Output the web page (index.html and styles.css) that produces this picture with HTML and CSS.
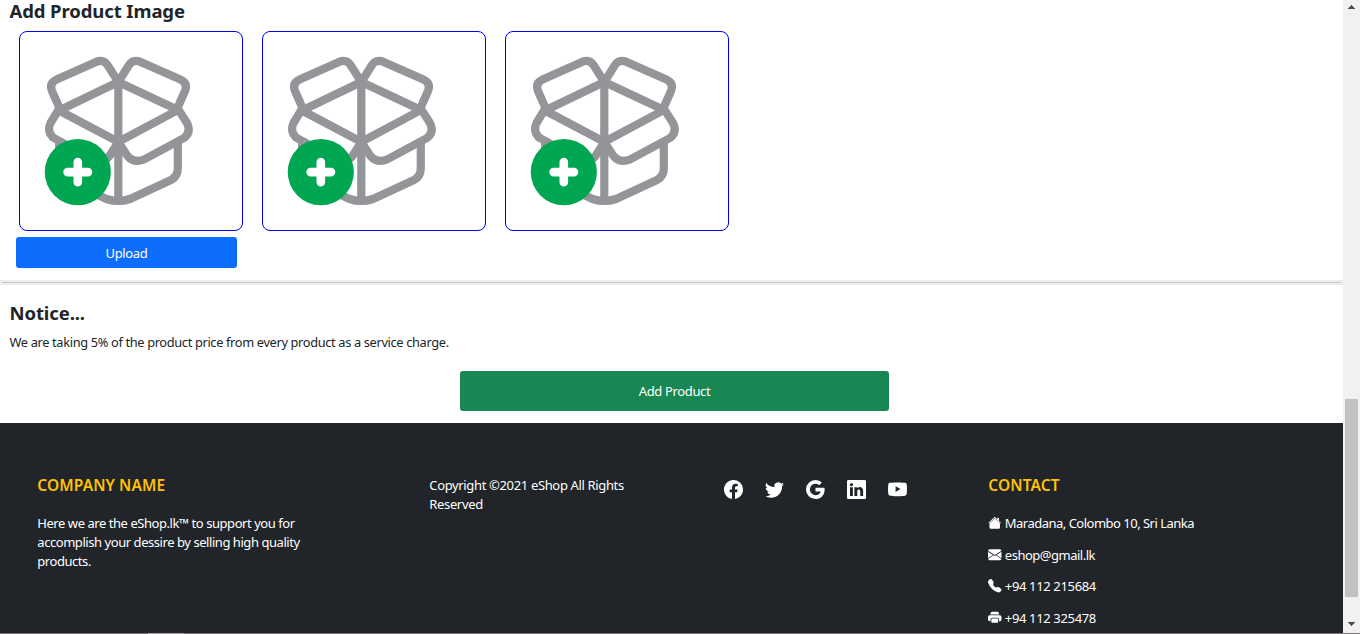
FILE: index.html
```html
<!DOCTYPE html>
<html lang="en">
<head>
<meta charset="utf-8">
<title>eShop | Add Product</title>
<link rel="stylesheet" href="styles.css">
</head>
<body>
<svg class="defs" width="0" height="0">
  <symbol id="box" viewBox="20 32 222 198">
    <g fill="none" stroke="#939598" stroke-width="8.2" stroke-linejoin="round">
      <path d="M118.3 80V201"/>
      <path d="M59 110.5L118.3 141.8L178 110L118.3 82Z"/>
      <path d="M118.3 82L107.500 65Q103.5 58.800 96 61.900L56 79.800Q49 83.500 52 91L59.500 108"/>
      <path d="M118.300 82L129 65Q133 58.800 140.600 61.900L181 79.800Q188 83.500 185 91L177.500 108"/>
      <path d="M59 109L50.500 123Q46.500 131 53 137.500L94 160Q103.500 163 109.500 156L118.300 142"/>
      <path d="M178 109L187 123Q191.500 132 184 138L144 159.500Q134 163.500 127.500 156L118.300 142"/>
      <path d="M177.800 140V168Q178 176 171 180L130 199Q118.300 203 106.500 199L66 180Q59 176 59.200 168V138"/>
    </g>
    <circle cx="77.800" cy="172.100" r="33.100" fill="#00a651"/>
    <path d="M77.800 162V182.300M67.600 172.100H88" stroke="#fff" stroke-width="8.600" stroke-linecap="round"/>
  </symbol>
</svg>
<div class="window">
  <main class="page">
    <section class="images">
      <h2 class="heading">Add Product Image</h2>
      <div class="cards">
        <div class="card"><svg><use href="#box"/></svg></div>
        <div class="card"><svg><use href="#box"/></svg></div>
        <div class="card"><svg><use href="#box"/></svg></div>
      </div>
      <button class="btn upload">Upload</button>
    </section>
    <div class="rule"></div>
    <section class="notice">
      <h2 class="heading">Notice...</h2>
      <p class="notice-text">We are taking 5% of the product price from every product as a service charge.</p>
      <button class="btn add">Add Product</button>
    </section>
    <footer class="footer">
      <div class="company">
        <h6 class="title">COMPANY NAME</h6>
        <p class="about">Here we are the eShop.lk™ to support you for<br>accomplish your dessire by selling high quality<br>products.</p>
      </div>
      <p class="copyright">Copyright ©2021 eShop All Rights<br>Reserved</p>
      <div class="social">
        <svg viewBox="0 0 16 16"><path d="M16 8.049c0-4.446-3.582-8.050-8-8.050C3.580 0-.002 3.603-.002 8.050c0 4.017 2.926 7.347 6.750 7.951v-5.625h-2.030V8.050H6.750V6.275c0-2.017 1.195-3.131 3.022-3.131.876 0 1.791.157 1.791.157v1.980h-1.009c-.993 0-1.303.621-1.303 1.258v1.510h2.218l-.354 2.326H9.250V16c3.824-.604 6.750-3.934 6.750-7.951z"/></svg>
        <svg viewBox="0 0 16 16"><path d="M5.026 15c6.038 0 9.341-5.003 9.341-9.334 0-.140 0-.282-.006-.422A6.685 6.685 0 0 0 16 3.542a6.658 6.658 0 0 1-1.889.518 3.301 3.301 0 0 0 1.447-1.817 6.533 6.533 0 0 1-2.087.793A3.286 3.286 0 0 0 7.875 6.030a9.325 9.325 0 0 1-6.767-3.429 3.289 3.289 0 0 0 1.018 4.382A3.323 3.323 0 0 1 .640 6.575v.045a3.288 3.288 0 0 0 2.632 3.218 3.203 3.203 0 0 1-.865.115 3.230 3.230 0 0 1-.614-.057 3.283 3.283 0 0 0 3.067 2.277A6.588 6.588 0 0 1 .780 13.580a6.320 6.320 0 0 1-.780-.045A9.344 9.344 0 0 0 5.026 15z"/></svg>
        <svg viewBox="0 0 16 16"><path d="M15.545 6.558a9.420 9.420 0 0 1 .139 1.626c0 2.434-.870 4.492-2.384 5.885h.002C11.978 15.292 10.158 16 8 16A8 8 0 1 1 8 0a7.689 7.689 0 0 1 5.352 2.082l-2.284 2.284A4.347 4.347 0 0 0 8 3.166c-2.087 0-3.860 1.408-4.492 3.304a4.792 4.792 0 0 0 0 3.063h.003c.635 1.893 2.405 3.301 4.492 3.301 1.078 0 2.004-.276 2.722-.764h-.003a3.702 3.702 0 0 0 1.599-2.431H8v-3.080h7.545z"/></svg>
        <svg viewBox="0 0 16 16"><path d="M0 1.146C0 .513.526 0 1.175 0h13.650C15.474 0 16 .513 16 1.146v13.708c0 .633-.526 1.146-1.175 1.146H1.175C.526 16 0 15.487 0 14.854V1.146zm4.943 12.248V6.169H2.542v7.225h2.401zm-1.200-8.212c.837 0 1.358-.554 1.358-1.248-.015-.709-.520-1.248-1.342-1.248-.822 0-1.359.540-1.359 1.248 0 .694.521 1.248 1.327 1.248h.016zm4.908 8.212V9.359c0-.216.016-.432.080-.586.173-.431.568-.878 1.232-.878.869 0 1.216.662 1.216 1.634v3.865h2.401V9.250c0-2.220-1.184-3.252-2.764-3.252-1.274 0-1.845.700-2.165 1.193v.025h-.016l.016-.025V6.169h-2.400c.030.678 0 7.225 0 7.225h2.400z"/></svg>
        <svg viewBox="0 0 16 16"><path fill-rule="evenodd" d="M8 2C12 2 14 2.200 14.500 2.400C15.300 2.700 15.700 3.300 15.800 4.100C16.060 6.700 16.060 9.300 15.800 11.400C15.600 12.500 15.200 12.900 14.400 13.200C13.500 13.500 11 13.600 8 13.600S2.500 13.500 1.600 13.200C.8 12.900.4 12.500.2 11.400C-.06 9.300-.06 6.700.2 4.100C.3 3.300.7 2.700 1.500 2.400C2 2.200 4 2 8 2zM6.400 5.209v4.818l4.157-2.408z"/></svg>
      </div>
      <div class="contact">
        <h6 class="title contact-title">CONTACT</h6>
        <p class="line address"><svg viewBox="0 0 16 16"><path d="M8 2.800l6.200 6.200V13.500A1.500 1.500 0 0 1 12.700 15h-9.400A1.500 1.500 0 0 1 1.800 13.500V9z"/><path d="M7.293 1.500a1 1 0 0 1 1.414 0L11 3.793V2.500a.5.5 0 0 1 .5-.5h1a.5.5 0 0 1 .5.500v3.293l2.354 2.353-.708.708L8 2.207 1.354 8.854l-.708-.708z"/></svg><span>Maradana, Colombo 10, Sri Lanka</span></p>
        <p class="line email"><svg viewBox="0 0 16 16"><path d="M.05 3.355A2 2 0 0 1 2 1.500h12a2 2 0 0 1 1.950 1.855L8 8.414zM0 4.297v7.804l5.953-3.858zM6.661 8.700l-6.470 4.257A2 2 0 0 0 2 14.500h12a2 2 0 0 0 1.808-1.544l-6.470-4.257L8 9.486zm3.386-.456L16 12.101V4.297z"/></svg><span>eshop@gmail.lk</span></p>
        <p class="line phone"><svg viewBox="0 0 16 16"><path d="M1.885.511a1.745 1.745 0 0 1 2.610.163L6.290 2.980c.329.423.445.974.315 1.494l-.547 2.190a.678.678 0 0 0 .178.643l2.457 2.457a.678.678 0 0 0 .644.178l2.189-.547a1.745 1.745 0 0 1 1.494.315l2.306 1.794c.829.645.905 1.870.163 2.611l-1.034 1.034c-.740.740-1.846 1.065-2.877.702a18.634 18.634 0 0 1-7.010-4.420 18.634 18.634 0 0 1-4.420-7.009c-.362-1.030-.037-2.137.703-2.877z"/></svg><span>+94 112 215684</span></p>
        <p class="line phone"><svg viewBox="0 0 16 16"><path d="M5 1a2 2 0 0 0-2 2v1h10V3a2 2 0 0 0-2-2zM11 9H5a1 1 0 0 0-1 1v3a1 1 0 0 0 1 1h6a1 1 0 0 0 1-1v-3a1 1 0 0 0-1-1z"/><path d="M0 7a2 2 0 0 1 2-2h12a2 2 0 0 1 2 2v3a2 2 0 0 1-2 2h-1v-2a2 2 0 0 0-2-2H5a2 2 0 0 0-2 2v2H2a2 2 0 0 1-2-2z"/></svg><span>+94 112 325478</span></p>
      </div>
    </footer>
  </main>
  <div class="scrollbar">
    <svg class="arrow" viewBox="0 0 7 4"><path d="M3 0h1v1h1v1h1v1h1v1H0V3h1V2h1V1h1z"/></svg>
    <div class="thumb"></div>
    <svg class="arrow" viewBox="0 0 7 4"><path d="M0 0h7v1H6v1H5v1H4v1H3V3H2V2H1V1H0z"/></svg>
  </div>
</div>
<div class="edge"><div class="edge-light"></div></div>
</body>
</html>
```
FILE: styles.css
```css
* { box-sizing: border-box; margin: 0; padding: 0; }
body { width: 1360px; height: 634px; overflow: hidden; background: #fff; color: #212529; font: 13px/19px "Noto Sans", sans-serif; display: flex; flex-direction: column; }
.defs { position: absolute; }
.window { display: flex; height: 633px; }
.page { width: 1343px; display: flex; flex-direction: column; }
.images { height: 280px; flex: none; }
.heading { font-size: 18.500px; line-height: 22px; height: 24px; font-weight: 700; letter-spacing: -0.100px; padding-left: 9.500px; white-space: nowrap; }
.cards { display: flex; gap: 19px; padding: 7px 0 0 19px; }
.card { width: 224px; height: 200px; border: 1px solid #0000f0; border-radius: 8px; }
.card svg { display: block; width: 222px; height: 198px; }
.btn { display: block; border: 0; border-radius: 3px; color: #fff; font: inherit; letter-spacing: -0.350px; }
.upload { width: 221px; height: 31px; margin: 6px 0 0 16px; padding-top: 2px; background: #0d6efd; }
.rule { flex: none; height: 5px; background: #eee; padding: 2px 2px 2px 2px; }
.rule::before { content: ""; display: block; height: 1px; background: #c8c8c8; }
.notice { flex: none; height: 138px; padding-top: 17px; }
.notice-text { padding: 7px 0 0 9.500px; font-size: 12.800px; letter-spacing: -0.340px; white-space: nowrap; }
.add { width: 429px; height: 40px; margin: 19px 0 0 460px; padding-top: 1px; background: #198754; }
.footer { flex: 1; min-height: 0; background: #212529; color: #fff; display: grid; grid-template-columns: 392px 294.500px 264.500px 1fr; padding: 52px 0 0 37.300px; white-space: nowrap; }
.title { font-size: 15.500px; line-height: 20px; font-weight: 600; letter-spacing: 0.100px; color: #ffc107; }
.about { padding-top: 19px; letter-spacing: -0.445px; }
.copyright { padding-top: 1px; letter-spacing: -0.350px; }
.social { display: flex; gap: 22px; padding-top: 4.500px; }
.social svg { width: 19px; height: 19px; fill: #fff; }
.contact-title { margin-bottom: 19px; }
.line { display: flex; align-items: center; gap: 3px; height: 19px; margin-bottom: 12.600px; }
.line svg { width: 13.500px; height: 13.500px; fill: #fff; margin-top: -1px; }
.address { letter-spacing: -0.510px; }
.email { letter-spacing: -0.490px; }
.phone { letter-spacing: -0.350px; }
.scrollbar { width: 17px; background: #f1f1f1; display: flex; flex-direction: column; align-items: center; padding: 5px 0; }
.arrow { width: 7px; height: 4px; fill: #505050; }
.thumb { width: 13px; height: 198px; margin: 390px 0 25px; background: #c1c1c1; }
.edge { height: 1px; background: #777377; padding-left: 148px; }
.edge-light { width: 36px; height: 1px; background: #aaa6aa; }
```
